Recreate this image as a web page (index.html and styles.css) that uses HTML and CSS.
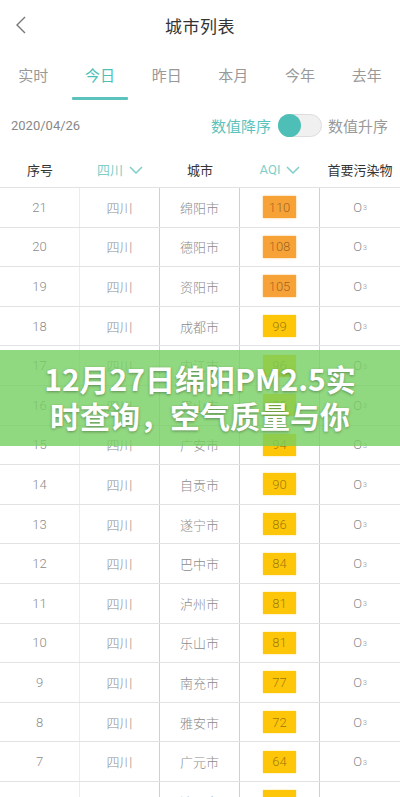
FILE: index.html
```html
<!DOCTYPE html>
<html lang="zh">
<head>
<meta charset="utf-8">
<link rel="stylesheet" href="styles.css">
</head>
<body>
<div class="page">
  <header class="topbar">
    <svg class="back" width="12" height="18" viewBox="0 0 12 18"><path d="M10 1 L2 9 L10 17" fill="none" stroke="#777" stroke-width="1.4"/></svg>
    <div class="title">城市列表</div>
  </header>
  <nav class="tabs">
    <div class="tab">实时</div>
    <div class="tab active">今日</div>
    <div class="tab">昨日</div>
    <div class="tab">本月</div>
    <div class="tab">今年</div>
    <div class="tab">去年</div>
  </nav>
  <div class="daterow">
    <div class="date">2020/04/26</div>
    <div class="sort">
      <span class="on">数值降序</span>
      <span class="toggle"><span class="knob"></span></span>
      <span class="off">数值升序</span>
    </div>
  </div>
  <div class="thead">
    <div class="th">序号</div>
    <div class="th teal">四川<svg class="chev" width="14" height="8" viewBox="0 0 14 8"><path d="M1 1 L7 7 L13 1" fill="none" stroke="#7fcfc8" stroke-width="1.5"/></svg></div>
    <div class="th">城市</div>
    <div class="th teal">AQI<svg class="chev" width="14" height="8" viewBox="0 0 14 8"><path d="M1 1 L7 7 L13 1" fill="none" stroke="#7fcfc8" stroke-width="1.5"/></svg></div>
    <div class="th">首要污染物</div>
  </div>
  <div class="tbody">
    <div class="row"><div class="c">21</div><div class="c">四川</div><div class="c">绵阳市</div><div class="c"><span class="badge orange">110</span></div><div class="c">O<sub>3</sub></div></div>
    <div class="row"><div class="c">20</div><div class="c">四川</div><div class="c">德阳市</div><div class="c"><span class="badge orange">108</span></div><div class="c">O<sub>3</sub></div></div>
    <div class="row"><div class="c">19</div><div class="c">四川</div><div class="c">资阳市</div><div class="c"><span class="badge orange">105</span></div><div class="c">O<sub>3</sub></div></div>
    <div class="row"><div class="c">18</div><div class="c">四川</div><div class="c">成都市</div><div class="c"><span class="badge yellow">99</span></div><div class="c">O<sub>3</sub></div></div>
    <div class="row"><div class="c">17</div><div class="c">四川</div><div class="c">内江市</div><div class="c"><span class="badge yellow">96</span></div><div class="c">O<sub>3</sub></div></div>
    <div class="row"><div class="c">16</div><div class="c">四川</div><div class="c">眉山市</div><div class="c"><span class="badge yellow">95</span></div><div class="c">O<sub>3</sub></div></div>
    <div class="row"><div class="c">15</div><div class="c">四川</div><div class="c">广安市</div><div class="c"><span class="badge yellow">94</span></div><div class="c">O<sub>3</sub></div></div>
    <div class="row"><div class="c">14</div><div class="c">四川</div><div class="c">自贡市</div><div class="c"><span class="badge yellow">90</span></div><div class="c">O<sub>3</sub></div></div>
    <div class="row"><div class="c">13</div><div class="c">四川</div><div class="c">遂宁市</div><div class="c"><span class="badge yellow">86</span></div><div class="c">O<sub>3</sub></div></div>
    <div class="row"><div class="c">12</div><div class="c">四川</div><div class="c">巴中市</div><div class="c"><span class="badge yellow">84</span></div><div class="c">O<sub>3</sub></div></div>
    <div class="row"><div class="c">11</div><div class="c">四川</div><div class="c">泸州市</div><div class="c"><span class="badge yellow">81</span></div><div class="c">O<sub>3</sub></div></div>
    <div class="row"><div class="c">10</div><div class="c">四川</div><div class="c">乐山市</div><div class="c"><span class="badge yellow">81</span></div><div class="c">O<sub>3</sub></div></div>
    <div class="row"><div class="c">9</div><div class="c">四川</div><div class="c">南充市</div><div class="c"><span class="badge yellow">77</span></div><div class="c">O<sub>3</sub></div></div>
    <div class="row"><div class="c">8</div><div class="c">四川</div><div class="c">雅安市</div><div class="c"><span class="badge yellow">72</span></div><div class="c">O<sub>3</sub></div></div>
    <div class="row"><div class="c">7</div><div class="c">四川</div><div class="c">广元市</div><div class="c"><span class="badge yellow">64</span></div><div class="c">O<sub>3</sub></div></div>
    <div class="row"><div class="c">6</div><div class="c">四川</div><div class="c">达州市</div><div class="c"><span class="badge yellow">61</span></div><div class="c">O<sub>3</sub></div></div>
  </div>
  <div class="overlay">
    <div class="headline">12月27日绵阳PM2.5实<br>时查询，空气质量与你</div>
  </div>
</div>
</body>
</html>
```

FILE: styles.css
```css
* { box-sizing: border-box; }
html, body { margin: 0; padding: 0; }
body {
  font-family: Roboto, "Noto Sans CJK SC", sans-serif;
  background: #fff;
  color: #333;
  width: 400px;
  height: 797px;
  overflow: hidden;
}
.page { position: relative; width: 400px; height: 797px; overflow: hidden; }

.topbar {
  height: 50px;
  display: flex;
  align-items: center;
  justify-content: center;
  position: relative;
}
.back { position: absolute; left: 15px; top: 16px; }
.title { font-size: 17px; color: #333; letter-spacing: 0.5px; }

.tabs {
  display: grid;
  grid-template-columns: repeat(6, 1fr);
  height: 50px;
}
.tab {
  display: flex;
  align-items: center;
  justify-content: center;
  font-size: 15px;
  color: #999;
  position: relative;
  padding-bottom: 2px;
}
.tab.active { color: #4dbfb6; }
.tab.active::after {
  content: "";
  position: absolute;
  left: 50%;
  bottom: 0;
  width: 56px;
  margin-left: -28px;
  height: 3px;
  background: #5bc3bb;
  border-radius: 1px;
}

.daterow {
  height: 50px;
  display: flex;
  align-items: center;
  justify-content: space-between;
  padding: 0 12px 0 11px;
}
.date { font-size: 13px; color: #888; }
.sort { display: flex; align-items: center; font-size: 15px; }
.sort .on { color: #5bc3bb; }
.sort .off { color: #999; }
.toggle {
  width: 44px;
  height: 23px;
  border-radius: 12px;
  background: #f0f0f0;
  border: 1px solid #ddd;
  margin: 0 6px 0 7px;
  position: relative;
  display: inline-block;
}
.knob {
  position: absolute;
  left: -1px;
  top: -1px;
  width: 23px;
  height: 23px;
  border-radius: 50%;
  background: #4dbfb6;
}

.thead {
  display: grid;
  grid-template-columns: repeat(5, 80px);
  height: 38px;
  border-bottom: 1px solid #e2e2e2;
}
.th {
  display: flex;
  align-items: center;
  justify-content: center;
  font-size: 13px;
  color: #333;
  padding-top: 2px;
}
.th.teal { color: #7fcfc8; }
.chev { margin-left: 6px; }

.row {
  display: grid;
  grid-template-columns: repeat(5, 80px);
  height: 39.6px;
  border-bottom: 1px solid #e2e2e2;
}
.c {
  display: flex;
  align-items: center;
  justify-content: center;
  font-size: 13px;
  font-weight: 300;
  color: #8c8c8c;
  border-right: 1px solid #d0d0d0;
}
.c:first-child { border-right-color: #ececec; }
.c:last-child { border-right: none; }
.c sub { font-size: 7px; vertical-align: baseline; position: relative; top: 1px; margin-left: 1px; }

.badge {
  display: inline-flex;
  align-items: center;
  justify-content: center;
  width: 33px;
  height: 22px;
  font-size: 13px;
  color: rgba(60, 40, 10, 0.5);
}
.badge.orange { background: #f7a236; box-shadow: 0 0 2px #f9c27a; }
.badge.yellow { background: #fdc609; box-shadow: 0 0 2px #fde08a; }

.overlay {
  position: absolute;
  left: 0;
  top: 350px;
  width: 400px;
  height: 96px;
  background: rgba(118, 208, 96, 0.8);
  display: flex;
  align-items: center;
  justify-content: center;
}
.headline {
  font-family: "Noto Sans CJK SC", sans-serif;
  font-weight: 700;
  font-size: 30px;
  line-height: 37px;
  color: #fff;
  text-align: center;
  text-shadow: 0 1px 3px rgba(0, 0, 0, 0.35);
  padding-bottom: 2px;
}
```
